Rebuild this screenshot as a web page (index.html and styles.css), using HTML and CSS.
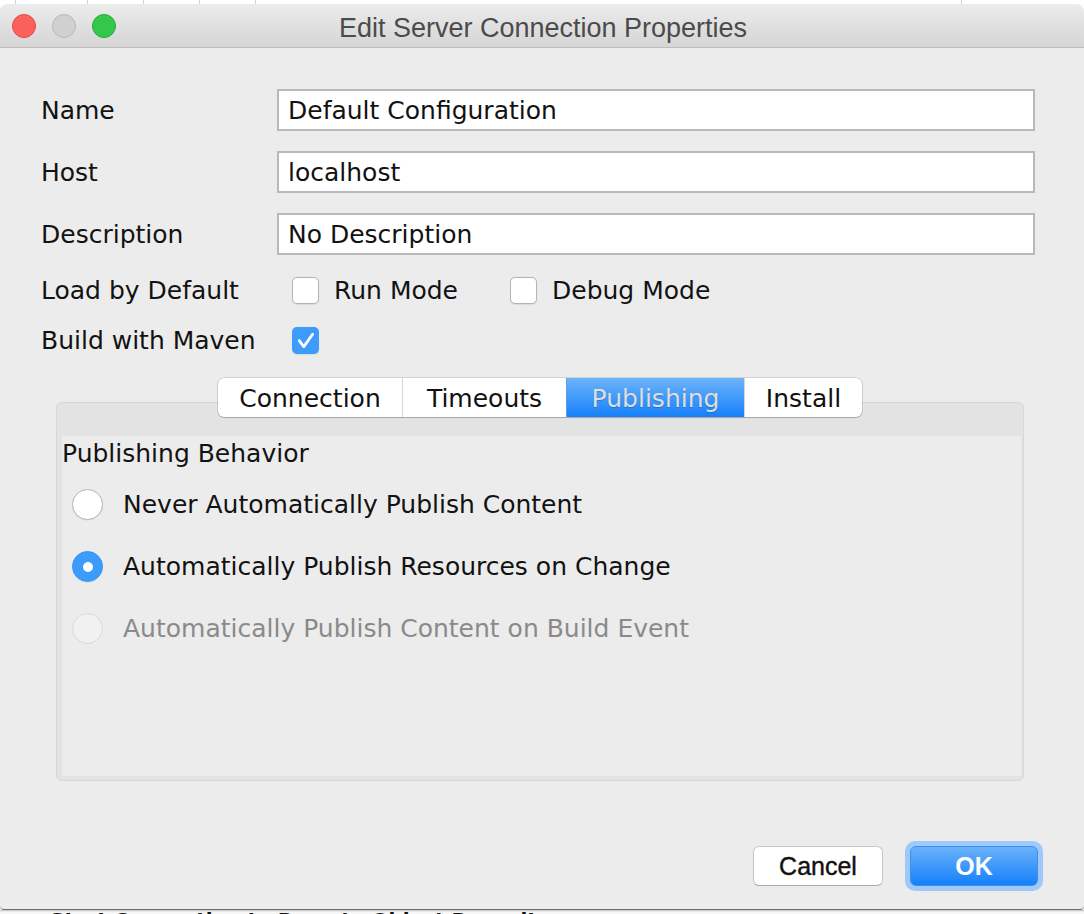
FILE: index.html
```html
<!DOCTYPE html>
<html>
<head>
<meta charset="utf-8">
<title>Edit Server Connection Properties</title>
<link rel="stylesheet" href="styles.css">
</head>
<body>
<div class="desk-top"><span></span><span></span><span></span><span></span><span></span><span></span><span class="last"></span></div>
<div class="window">
  <div class="titlebar">
    <div class="lights">
      <span class="light red"></span>
      <span class="light gray"></span>
      <span class="light green"></span>
    </div>
    <div class="title">Edit Server Connection Properties</div>
    <div></div>
  </div>
  <div class="content">
    <div class="form">
      <div class="frow"><span class="lbl">Name</span><div class="field">Default Configuration</div></div>
      <div class="frow"><span class="lbl">Host</span><div class="field">localhost</div></div>
      <div class="frow"><span class="lbl">Description</span><div class="field">No Description</div></div>
      <div class="crow">
        <span class="lbl">Load by Default</span>
        <div class="checks">
          <span class="check"><span class="box"></span>Run Mode</span>
          <span class="check"><span class="box"></span>Debug Mode</span>
        </div>
      </div>
      <div class="crow">
        <span class="lbl">Build with Maven</span>
        <div class="checks">
          <span class="check"><span class="box on"><svg width="27" height="27" viewBox="0 0 27 27"><path d="M7.2 13.6 L11.8 19.6 L20.6 7.2" fill="none" stroke="#fff" stroke-width="2.8" stroke-linecap="round" stroke-linejoin="round"/></svg></span></span>
        </div>
      </div>
    </div>
    <div class="tabs-wrap">
      <div class="tabs">
        <div class="tab">Connection</div>
        <div class="tab">Timeouts</div>
        <div class="tab sel">Publishing</div>
        <div class="tab">Install</div>
      </div>
    </div>
    <div class="panel">
      <div class="panel-inner">
        <div class="group-title">Publishing Behavior</div>
        <div class="radios">
          <div class="radio"><span class="dot"></span>Never Automatically Publish Content</div>
          <div class="radio"><span class="dot on"></span>Automatically Publish Resources on Change</div>
          <div class="radio disabled"><span class="dot off"></span>Automatically Publish Content on Build Event</div>
        </div>
      </div>
    </div>
    <div class="buttons">
      <button class="btn cancel">Cancel</button>
      <div class="ring"><button class="btn ok">OK</button></div>
    </div>
  </div>
</div>
<div class="desk-bottom">Start Connection to Remote Object Repository</div>
</body>
</html>
```

FILE: styles.css
```css
html, body {
  margin: 0;
  padding: 0;
}
body {
  width: 1084px;
  height: 914px;
  overflow: hidden;
  background: #ffffff;
  font-family: "DejaVu Sans", sans-serif;
  color: #121212;
}

.desk-top {
  height: 4px;
  display: grid;
  grid-template-columns: 16px 72px 56px 56px 56px 706px 1fr;
  background: #ffffff;
}
.desk-top span {
  border-right: 1px solid #cfcfcf;
}
.desk-top span.last {
  border-right: none;
}

.window {
  background: #ececec;
  border-radius: 8px 8px 4px 4px;
  border-bottom: 1px solid #6f6f6f;
}

.titlebar {
  height: 43px;
  border-bottom: 1px solid #bcbcbc;
  background: linear-gradient(#ececec, #d5d5d5);
  border-radius: 8px 8px 0 0;
  display: grid;
  grid-template-columns: 1fr auto 1fr;
  align-items: center;
}
.lights {
  display: flex;
  gap: 16px;
  padding-left: 12px;
}
.light {
  width: 24px;
  height: 24px;
  border-radius: 50%;
  box-sizing: border-box;
}
.light.red {
  background: #fc605b;
  border: 1px solid #de4a46;
}
.light.gray {
  background: #d0d0d0;
  border: 1px solid #bababa;
}
.light.green {
  background: #34c84a;
  border: 1px solid #28a838;
}
.title {
  font-family: "Liberation Sans", sans-serif;
  font-size: 27px;
  color: #4b4b4b;
  white-space: nowrap;
  padding-top: 5px;
  padding-left: 2px;
}

.form {
  display: flex;
  flex-direction: column;
  padding: 41px 0 0 41px;
}
.frow {
  display: flex;
  align-items: center;
  height: 42px;
  margin-bottom: 20px;
}
.lbl {
  width: 236px;
  flex: none;
  font-size: 25px;
  color: #121212;
  white-space: nowrap;
}
.field {
  width: 758px;
  height: 42px;
  box-sizing: border-box;
  border: 2px solid #b8b8b8;
  background: #ffffff;
  padding-left: 9px;
  display: flex;
  align-items: center;
  font-size: 25px;
  color: #121212;
}
.crow {
  display: flex;
  align-items: center;
  height: 28px;
  margin-top: 1px;
  margin-bottom: 21px;
}
.checks {
  display: flex;
  align-items: center;
  padding-left: 15px;
  gap: 52px;
}
.check {
  display: flex;
  align-items: center;
  gap: 15px;
  font-size: 25px;
  white-space: nowrap;
}
.box {
  width: 27px;
  height: 27px;
  box-sizing: border-box;
  border: 1px solid #b4b4b4;
  border-radius: 5px;
  background: #ffffff;
  box-shadow: 0 0.5px 1px rgba(0, 0, 0, 0.08);
}
.box.on {
  border: none;
  background: #3d9bfc;
  display: flex;
}

.tabs-wrap {
  display: flex;
  justify-content: center;
  margin: 3px 60px -15px 56px;
  position: relative;
  z-index: 1;
}
.tabs {
  display: grid;
  grid-template-columns: 184px 164px 178px 118px;
  height: 39px;
  border-radius: 6px;
  background: #ffffff;
  box-shadow: 0 0 0 0.5px rgba(0, 0, 0, 0.22), 0 1px 1px rgba(0, 0, 0, 0.18);
  overflow: hidden;
}
.tab {
  display: flex;
  align-items: center;
  justify-content: center;
  font-size: 25px;
  color: #111111;
  border-left: 1px solid #d6d6d6;
  padding-top: 2px;
}
.tab:first-child {
  border-left: none;
}
.tab.sel {
  background: linear-gradient(#6db4fb, #1680fb);
  color: #dedede;
  text-shadow: 0 1px 1px rgba(0, 0, 0, 0.18);
  border-left-color: #5a9ff0;
}

.panel {
  margin: 0 60px 0 56px;
  height: 379px;
  box-sizing: border-box;
  border: 1px solid #d6d6d6;
  border-radius: 6px;
  background: #e3e3e3;
  padding: 33px 2px 4px 5px;
  display: flex;
}
.panel-inner {
  flex: 1;
  background: #ececec;
}
.group-title {
  font-size: 25px;
  line-height: 30px;
  padding: 3px 0 0 0;
  color: #121212;
}
.radios {
  display: flex;
  flex-direction: column;
  gap: 31px;
  padding: 20px 0 0 10px;
}
.radio {
  display: flex;
  align-items: center;
  gap: 20px;
  height: 31px;
  font-size: 25px;
  color: #121212;
  white-space: nowrap;
}
.radio.disabled {
  color: #8a8a8a;
}
.dot {
  width: 31px;
  height: 31px;
  flex: none;
  border-radius: 50%;
  box-sizing: border-box;
  border: 1px solid #b6b6b6;
  background: #ffffff;
  box-shadow: 0 0.5px 1px rgba(0, 0, 0, 0.08);
}
.dot.on {
  background: #3d9bfc;
  border-color: #3a95f5;
  display: flex;
  align-items: center;
  justify-content: center;
}
.dot.on::after {
  content: "";
  width: 10px;
  height: 10px;
  border-radius: 50%;
  background: #ffffff;
}
.dot.off {
  background: #f1f1f1;
  border-color: #d8d8d8;
  box-shadow: none;
}

.buttons {
  display: flex;
  justify-content: flex-end;
  align-items: center;
  gap: 22px;
  margin-top: 60px;
  padding: 0 41px 18px 0;
}
.btn {
  height: 40px;
  box-sizing: border-box;
  border-radius: 6px;
  font-family: "Liberation Sans", sans-serif;
  font-size: 25px;
  padding: 0;
}
.btn.cancel {
  width: 130px;
  background: #ffffff;
  border: 1px solid #c6c6c6;
  border-bottom-color: #ababab;
  color: #111111;
  -webkit-text-stroke: 0.4px #111111;
}
.ring {
  display: flex;
  padding: 5px;
  background: #9fc9f8;
  border-radius: 10px;
}
.btn.ok {
  width: 128px;
  background: linear-gradient(#6ab2fa, #1580fb);
  border: 1px solid #3e8ef0;
  color: #ffffff;
  font-weight: bold;
}

.desk-bottom {
  height: 10px;
  padding-left: 50px;
  background: linear-gradient(#bdbdbd, #f7f7f7 2px);
  font-family: "DejaVu Sans", sans-serif;
  font-weight: bold;
  font-size: 20px;
  line-height: 20px;
  color: #111111;
  white-space: nowrap;
}
```
